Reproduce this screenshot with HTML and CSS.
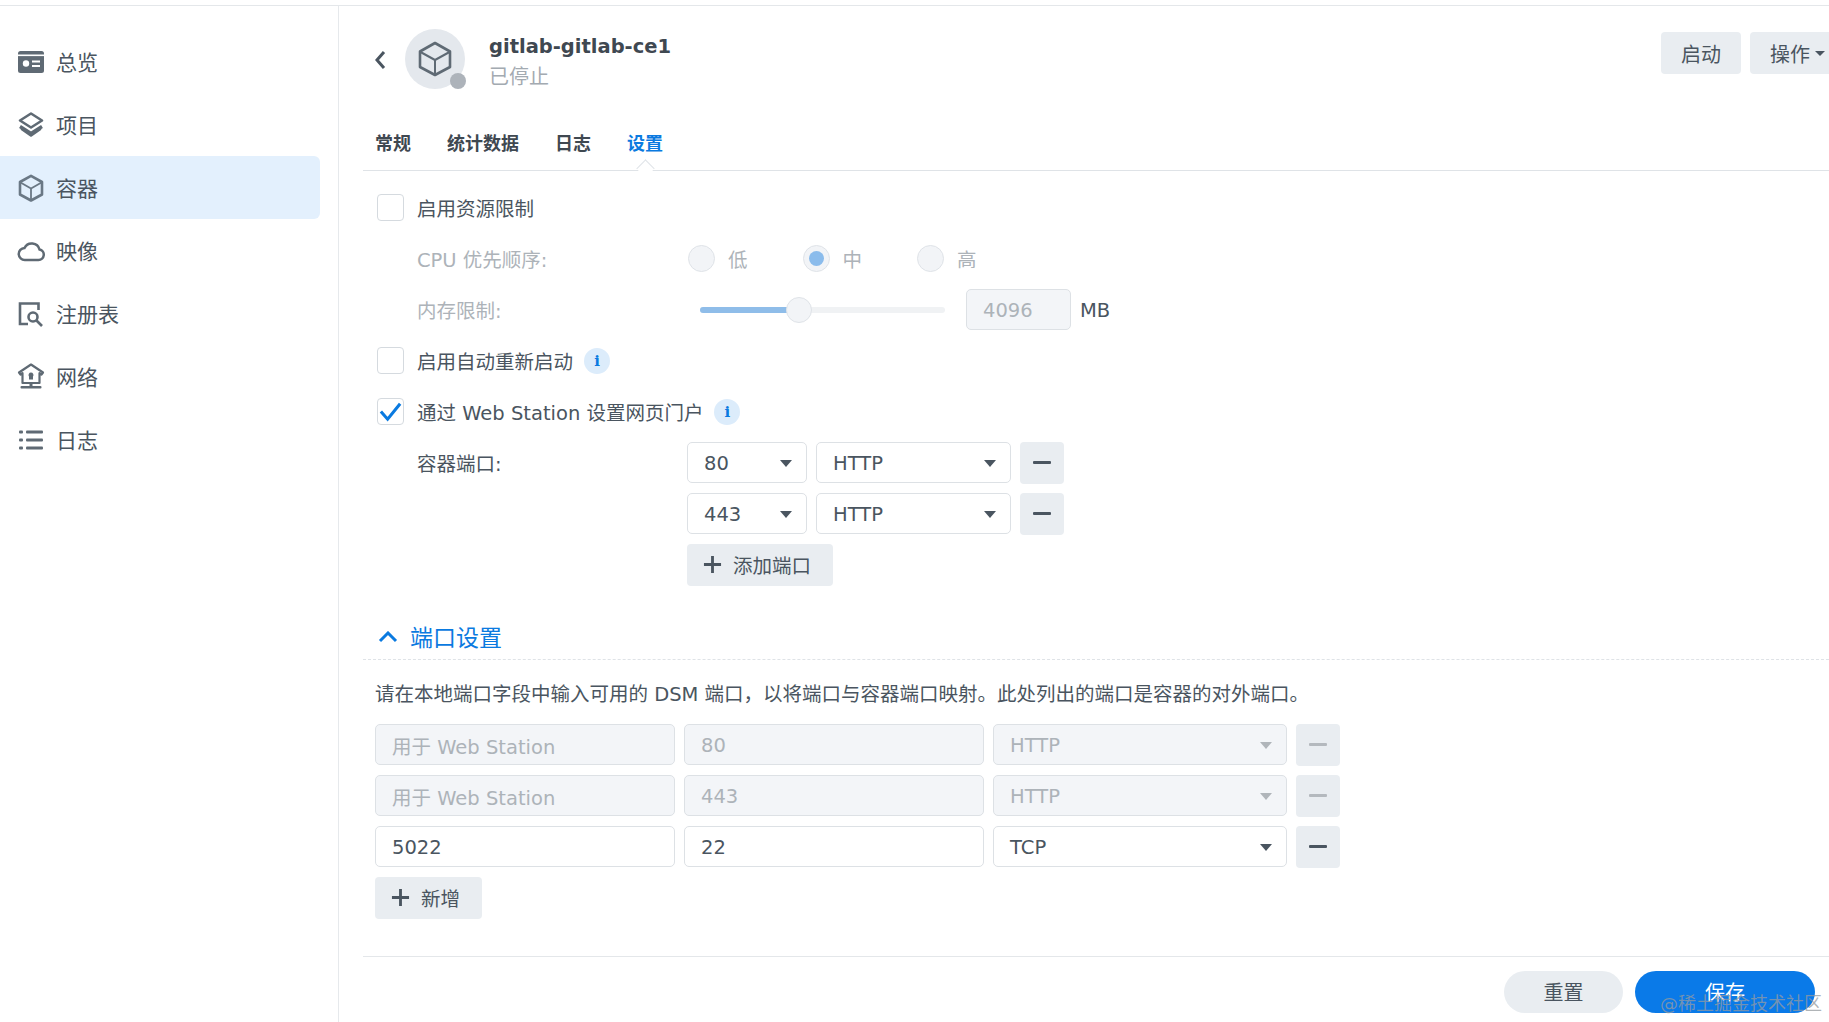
FILE: index.html
```html
<!DOCTYPE html>
<html lang="zh">
<head>
<meta charset="utf-8">
<title>gitlab-gitlab-ce1</title>
<link rel="stylesheet" href="styles.css">
</head>
<body>
<div class="app">
  <aside class="sidebar">
    <nav class="nav">
      <a class="nav-item"><svg class="nav-icon" viewBox="0 0 28 28"><rect x="1" y="3" width="26" height="22" rx="2.5" fill="#5f6a74"/><rect x="1" y="6.5" width="26" height="1.6" fill="#fff"/><circle cx="9" cy="15.5" r="3.2" fill="#fff"/><rect x="15" y="12.5" width="8" height="2" fill="#fff"/><rect x="15" y="17" width="8" height="2" fill="#fff"/></svg><span>总览</span></a>
      <a class="nav-item"><svg class="nav-icon" viewBox="0 0 28 28" fill="none" stroke="#5f6a74" stroke-width="2.6" stroke-linejoin="round"><path d="M14 2.5 25 9.5 14 16.5 3 9.5Z"/><path d="M3 15.5 14 22.5 25 15.5" stroke-width="3.4"/><path d="M4 18 14 25 24 18" stroke-width="1.6"/></svg><span>项目</span></a>
      <a class="nav-item active"><svg class="nav-icon" viewBox="0 0 28 28" fill="none" stroke="#6a7885" stroke-width="2.6" stroke-linejoin="round"><path d="M14 1.800 25 8v12.500L14 26.500 3 20.500V8Z"/><path d="M3.500 8.500 14 14.500 24.500 8.500M14 14.500V26" stroke-width="1.800"/></svg><span>容器</span></a>
      <a class="nav-item"><svg class="nav-icon" viewBox="0 0 28 28" fill="none" stroke="#5f6a74" stroke-width="2.500"><path d="M8 23h13.500a5.300 5.300 0 0 0 1-10.500A8 8 0 0 0 7.500 11 6 6 0 0 0 8 23Z"/></svg><span>映像</span></a>
      <a class="nav-item"><svg class="nav-icon" viewBox="0 0 28 28" fill="none" stroke="#5f6a74" stroke-width="2.600"><path d="M11 24H3V3.500h18.500V10"/><circle cx="16" cy="17" r="4.500"/><path d="M19.500 20.500 25 26"/></svg><span>注册表</span></a>
      <a class="nav-item"><svg class="nav-icon" viewBox="0 0 28 28"><path d="M14 1.500 26 9.500 24.500 11.500 22.500 10.200V20h-17V10.200L3.500 11.500 2 9.500Z" fill="none" stroke="#5f6a74" stroke-width="2.200" stroke-linejoin="round"/><path d="M14 9.500a2.500 2.500 0 0 1 2 4v3h-4v-3a2.500 2.500 0 0 1 2-4Z" fill="#5f6a74"/><rect x="12.500" y="20" width="3" height="3" fill="#5f6a74"/><rect x="3.500" y="23" width="21" height="2.600" rx="1" fill="#5f6a74"/></svg><span>网络</span></a>
      <a class="nav-item"><svg class="nav-icon" viewBox="0 0 28 28" fill="#5f6a74"><rect x="2" y="4.500" width="4" height="3" rx="1"/><rect x="9" y="4.500" width="17" height="3" rx="1"/><rect x="2" y="12.500" width="4" height="3" rx="1"/><rect x="9" y="12.500" width="17" height="3" rx="1"/><rect x="2" y="20.500" width="4" height="3" rx="1"/><rect x="9" y="20.500" width="17" height="3" rx="1"/></svg><span>日志</span></a>
    </nav>
  </aside>

  <main class="main">
    <header class="head">
      <svg class="back" viewBox="0 0 14 22" fill="none" stroke="#4a5560" stroke-width="3"><path d="M11 3 4 11l7 8"/></svg>
      <div class="avatar">
        <svg class="avatar-icon" viewBox="0 0 34 36" fill="none" stroke="#5f6a74" stroke-width="2.600" stroke-linejoin="round"><path d="M17 2 32 10.500V26L17 34 2 26V10.500Z"/><path d="M2.500 11 17 19 31.500 11M17 19V33.500" stroke-width="2"/></svg>
        <span class="status-dot"></span>
      </div>
      <div class="title-block">
        <div class="title">gitlab-gitlab-ce1</div>
        <div class="subtitle">已停止</div>
      </div>
      <div class="head-actions">
        <button class="btn head-btn start">启动</button>
        <button class="btn head-btn ops">操作<i class="caret small"></i></button>
      </div>
    </header>

    <div class="tabs">
      <span class="tab">常规</span>
      <span class="tab">统计数据</span>
      <span class="tab">日志</span>
      <span class="tab current">设置</span>
    </div>

    <section class="form">
      <div class="row check-row"><span class="check"></span><span>启用资源限制</span></div>
      <div class="row sub-row muted">
        <span class="label">CPU 优先顺序:</span>
        <div class="radios">
          <span class="radio-item"><span class="radio"></span>低</span>
          <span class="radio-item"><span class="radio on"></span>中</span>
          <span class="radio-item"><span class="radio"></span>高</span>
        </div>
      </div>
      <div class="row sub-row">
        <span class="label muted">内存限制:</span>
        <div class="slider"><span class="slider-fill"></span><span class="slider-thumb"></span></div>
        <div class="field mem disabled">4096</div>
        <span class="unit">MB</span>
      </div>
      <div class="row check-row"><span class="check"></span><span>启用自动重新启动</span><span class="info">i</span></div>
      <div class="row check-row"><span class="check"><svg viewBox="0 0 26 26" fill="none" stroke="#0a7ae0" stroke-width="3.200"><path d="M3 13 10 21 23 5"/></svg></span><span>通过 Web Station 设置网页门户</span><span class="info">i</span></div>
      <div class="row sub-row">
        <span class="label">容器端口:</span>
        <div class="field sel port">80<i class="caret"></i></div>
        <div class="field sel proto">HTTP<i class="caret"></i></div>
        <button class="btn minus"><i class="dash"></i></button>
      </div>
      <div class="row sub-row">
        <span class="label"></span>
        <div class="field sel port">443<i class="caret"></i></div>
        <div class="field sel proto">HTTP<i class="caret"></i></div>
        <button class="btn minus"><i class="dash"></i></button>
      </div>
      <div class="row sub-row">
        <span class="label"></span>
        <button class="btn add add-port"><svg class="plus" viewBox="0 0 20 20" fill="none" stroke="#4a5560" stroke-width="3"><path d="M10 1v18M1 10h18"/></svg>添加端口</button>
      </div>
    </section>

    <section class="ports">
      <div class="acc"><svg class="acc-chev" viewBox="0 0 20 12" fill="none" stroke="#0a7ae0" stroke-width="3"><path d="M2 10 10 2l8 8"/></svg><span>端口设置</span></div>
      <p class="desc">请在本地端口字段中输入可用的 DSM 端口，以将端口与容器端口映射。此处列出的端口是容器的对外端口。</p>
      <div class="port-row">
        <div class="field wide disabled">用于 Web Station</div>
        <div class="field wide disabled">80</div>
        <div class="field sel long disabled">HTTP<i class="caret"></i></div>
        <button class="btn minus off"><i class="dash"></i></button>
      </div>
      <div class="port-row">
        <div class="field wide disabled">用于 Web Station</div>
        <div class="field wide disabled">443</div>
        <div class="field sel long disabled">HTTP<i class="caret"></i></div>
        <button class="btn minus off"><i class="dash"></i></button>
      </div>
      <div class="port-row">
        <div class="field wide">5022</div>
        <div class="field wide">22</div>
        <div class="field sel long">TCP<i class="caret"></i></div>
        <button class="btn minus"><i class="dash"></i></button>
      </div>
      <div class="port-row">
        <button class="btn add add-new"><svg class="plus" viewBox="0 0 20 20" fill="none" stroke="#4a5560" stroke-width="3"><path d="M10 1v18M1 10h18"/></svg>新增</button>
      </div>
    </section>

    <footer class="foot">
      <button class="pill reset">重置</button>
      <button class="pill save">保存</button>
    </footer>
  </main>
</div>
<div class="watermark">@稀土掘金技术社区</div>
</body>
</html>
```

FILE: styles.css
```css
* { box-sizing: border-box; }
html, body { margin: 0; height: 100%; overflow: hidden; }
body {
  background: #fff;
  color: #4a5560;
  font-family: "DejaVu Sans", "Noto Sans CJK SC", sans-serif;
  font-size: 19.5px;
  position: relative;
}
button { font: inherit; color: inherit; border: 0; padding: 0; }
i { font-style: normal; }

.app {
  display: flex;
  height: 1022px;
  margin-top: 5px;
  border-top: 1px solid #e4e7ea;
}

/* sidebar */
.sidebar { width: 339px; flex: none; border-right: 1px solid #e6e9ec; padding-top: 24px; }
.nav { display: flex; flex-direction: column; width: 320px; }
.nav-item { display: flex; align-items: center; height: 63px; padding-left: 17px; gap: 11px; border-radius: 0 6px 6px 0; font-size: 21px; }
.nav-item span { padding-bottom: 2px; }
.nav-item.active { background: #e3f0fd; }
.nav-icon { width: 28px; height: 28px; flex: none; }

/* main */
.main { flex: 1; min-width: 0; padding-left: 24px; display: flex; flex-direction: column; }
.head { display: flex; align-items: center; height: 104px; margin-right: -40px; padding-left: 10px; }
.back { width: 14px; height: 22px; flex: none; margin-right: 19px; margin-top: 4px; }
.avatar { width: 60px; height: 60px; border-radius: 50%; background: #e4e8ed; flex: none; position: relative; display: flex; align-items: center; justify-content: center; margin-right: 24px; margin-top: 2px; margin-left: -1px; }
.avatar-icon { width: 34px; height: 36px; }
.status-dot { position: absolute; right: -1px; bottom: 0; width: 16px; height: 16px; border-radius: 50%; background: #adb3ba; }
.title-block { flex: 1; margin-top: 7px; }
.title { font-weight: 700; font-size: 19.500px; line-height: 30px; color: #3f4851; }
.subtitle { font-size: 20px; line-height: 30px; color: #a3aab1; }
.head-actions { display: flex; gap: 9px; margin-top: -10px; }
.btn { background: #e9edf1; border-radius: 4px; display: flex; align-items: center; justify-content: center; }
.head-btn { height: 42px; font-size: 20px; }
.start { width: 80px; }
.ops { width: 119px; justify-content: flex-start; padding-left: 20px; }

.caret { width: 0; height: 0; border-left: 6.500px solid transparent; border-right: 6.500px solid transparent; border-top: 7px solid #4a5560; }
.caret.small { border-left-width: 5px; border-right-width: 5px; border-top-width: 5px; margin-left: 5px; }

.tabs { display: flex; gap: 36px; height: 61px; padding: 21px 0 0 12px; border-bottom: 1px solid #dfe3e7; position: relative; font-weight: 700; font-size: 18px; line-height: 26px; color: #3f4851; }
.tab { position: relative; height: 39px; }
.tab.current { color: #0a7ae0; }
.tab.current::after { content: ""; position: absolute; left: 12px; bottom: -5px; width: 12px; height: 12px; background: #fff; border-left: 1px solid #dfe3e7; border-top: 1px solid #dfe3e7; transform: rotate(45deg); }

/* form */
.form { padding-top: 11px; }
.row { display: flex; align-items: center; height: 51px; }
.check-row { padding-left: 14px; }
.sub-row { padding-left: 54px; }
.label { width: 270px; flex: none; }
.muted { color: #adb3b9; }
.check { width: 27px; height: 27px; border: 1px solid #d5dadf; border-radius: 4px; margin-right: 13px; flex: none; }
.check svg { display: block; width: 25px; height: 25px; }
.info { width: 26px; height: 26px; border-radius: 50%; background: #dcecfb; color: #0a7ae0; font: 700 15px/26px "DejaVu Serif", serif; text-align: center; margin-left: 11px; }

.radios { display: flex; margin-left: 1px; }
.radio-item { display: flex; align-items: center; width: 114.500px; gap: 13px; }
.radio { width: 27px; height: 27px; border-radius: 50%; background: #f2f4f7; border: 1px solid #dfe3e8; display: flex; align-items: center; justify-content: center; }
.radio.on::after { content: ""; width: 15px; height: 15px; border-radius: 50%; background: #8bbcec; }

.slider { width: 245px; height: 6px; margin-left: 13px; background: #f0f2f4; border-radius: 3px; position: relative; }
.slider-fill { display: block; width: 99px; height: 6px; background: #8fbde9; border-radius: 3px; }
.slider-thumb { position: absolute; left: 86px; top: -10px; width: 26px; height: 26px; border-radius: 50%; background: #f2f4f7; border: 1px solid #dfe3e8; }

.field { height: 41px; border: 1px solid #dde1e5; border-radius: 5px; background: #fff; padding: 2px 16px 0; display: flex; align-items: center; flex: none; }
.field.disabled { background: #f3f5f8; color: #adb3b9; }
.sel { justify-content: space-between; padding-right: 14px; }
.sel .caret { flex: none; }
.disabled .caret { border-top-color: #b0b5ba; }
.mem { width: 105px; margin-left: 21px; }
.unit { margin-left: 9px; padding-top: 2px; }
.port { width: 120px; }
.proto { width: 195px; margin-left: 9px; }
.minus { width: 44px; height: 42px; flex: none; margin-left: 9px; }
.dash { width: 18px; height: 3px; background: #4a5560; border-radius: 1px; display: block; }
.minus.off .dash { background: #b4b9be; }
.add { height: 42px; justify-content: flex-start; padding-left: 16px; gap: 11px; }
.add-port { width: 146px; }
.add-new { width: 107px; }
.plus { width: 19px; height: 19px; flex: none; }

/* ports */
.ports { padding-top: 22px; }
.acc { display: flex; align-items: center; height: 48px; border-bottom: 1px dashed #dfe3e7; padding-left: 15px; gap: 12px; color: #0a7ae0; font-size: 23px; }
.acc-chev { width: 20px; height: 12px; flex: none; margin-top: 3px; }
.desc { margin: 0; height: 59px; padding: 0 0 0 12px; line-height: 70px; white-space: nowrap; }
.port-row { display: flex; align-items: center; height: 51px; padding-left: 12px; gap: 9px; }
.wide { width: 300px; }
.long { width: 294px; }
.port-row .minus { margin-left: 0; }

/* footer */
.foot { margin-top: 33px; border-top: 1px solid #e4e7ea; height: 66px; display: flex; justify-content: flex-end; padding: 14px 14px 0 0; gap: 12px; align-items: flex-start; }
.pill { height: 42px; border-radius: 21px; font-size: 20px; padding-bottom: 2px; }
.reset { width: 119px; background: #e9edf1; }
.save { width: 180px; background: #0a7ae8; color: #fff; }

.watermark { position: absolute; right: 7px; top: 991px; font-size: 18px; line-height: 26px; color: rgba(150, 155, 160, .75); white-space: nowrap; }
```
